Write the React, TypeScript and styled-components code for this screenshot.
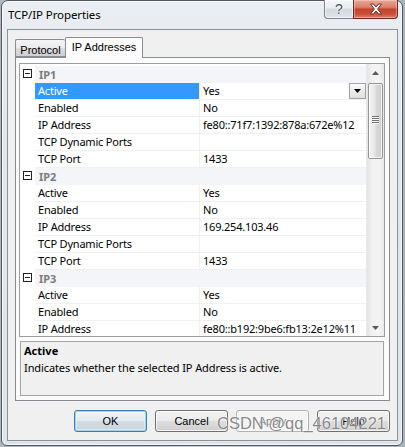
import React from "react";
import styled, { createGlobalStyle } from "styled-components";

const Global = createGlobalStyle`
  html, body { margin: 0; padding: 0; }
  body {
    background: linear-gradient(90deg, #aeb6be 0%, #c9cfd5 50%, #aab2ba 100%);
    width: 405px; height: 447px; overflow: hidden;
    font-family: "Noto Sans", "Open Sans", sans-serif;
  }
`;

const UI = `"Noto Sans", "Open Sans", sans-serif`;
const MS = `"Liberation Sans", Arial, sans-serif`;

const Window = styled.div`
  position: relative;
  box-sizing: border-box;
  width: 402px;
  height: 446px;
  margin-left: 1px;
  border: 1px solid #4f5862;
  border-radius: 7px 7px 6px 6px;
  background: linear-gradient(180deg, #eaeef2 0%, #e2e7ec 30%, #dfe4e9 100%);
  box-shadow: inset 0 0 0 1px rgba(255,255,255,0.7);
  display: flex;
  flex-direction: column;
  padding: 0 4px 4px 5px;
`;

const TitleBar = styled.div`
  height: 28px;
  display: flex;
  align-items: flex-start;
  justify-content: space-between;
`;

const Title = styled.div`
  font-family: ${UI};
  font-size: 11.5px;
  letter-spacing: -0.1px;
  color: #000;
  padding: 6px 0 0 1px;
  line-height: 16px;
  text-shadow: 0 0 6px rgba(255,255,255,0.9);
`;

const Caption = styled.div`
  display: flex;
  margin-top: -1px;
`;

const HelpBtn = styled.div`
  box-sizing: border-box;
  width: 29px;
  height: 19px;
  border: 1px solid #7c858f;
  border-top: none;
  border-right: none;
  border-radius: 0 0 0 4px;
  background: linear-gradient(180deg, #f4f6f8 0%, #e9edf1 45%, #d3d9df 50%, #dde3e9 100%);
  box-shadow: inset 0 0 0 1px rgba(255,255,255,0.6);
  display: flex;
  align-items: center;
  justify-content: center;
  font-family: ${MS};
  font-size: 14px;
  color: #4a535c;
  line-height: 1;
  text-shadow: 0 0 2px #fff, 0 0 1px #fff;
`;

const CloseBtn = styled.div`
  box-sizing: border-box;
  width: 45px;
  height: 19px;
  border: 1px solid #6a2a20;
  border-top: none;
  border-radius: 0 0 4px 0;
  background: linear-gradient(180deg, #e8a897 0%, #d9806c 40%, #c5432a 52%, #c9503a 78%, #de8066 100%);
  box-shadow: inset 0 0 0 1px rgba(255,220,210,0.45);
  display: flex;
  align-items: center;
  justify-content: center;
`;

const Client = styled.div`
  flex: 1;
  box-sizing: border-box;
  border: 1px solid #8a939c;
  background: #f0f0f0;
  display: flex;
  flex-direction: column;
  padding: 7px 7px 8px 7px;
`;

const TabRow = styled.div`
  display: flex;
  align-items: flex-end;
  height: 20px;
  position: relative;
  z-index: 1;
`;

const Tab = styled.div<{ $active?: boolean }>`
  box-sizing: border-box;
  font-family: ${MS};
  font-size: 11px;
  color: #000;
  white-space: nowrap;
  border: 1px solid #898c95;
  border-radius: 2px 2px 0 0;
  display: flex;
  align-items: center;
  justify-content: center;
  ${(p) =>
    p.$active
      ? `
    height: 21px;
    margin-bottom: -1px;
    border-bottom: none;
    background: #fbfbfb;
    padding: 0 0 2px 0;
    width: 78px;
  `
      : `
    height: 18px;
    border-right: none;
    background: linear-gradient(180deg, #f3f3f3 0%, #ebebeb 50%, #dddddd 51%, #cfcfcf 100%);
    width: 50px;
    padding-top: 3px;
  `}
`;

const Panel = styled.div`
  box-sizing: border-box;
  height: 344px;
  border: 1px solid #898c95;
  background: #fbfbfb;
  display: flex;
  flex-direction: column;
  padding: 5px 4px 4px 3px;
  gap: 4px;
`;

const Grid = styled.div`
  box-sizing: border-box;
  height: 274px;
  border: 1px solid #9a9da2;
  background: #fff;
  display: flex;
  overflow: hidden;
`;

const Rows = styled.div`
  flex: 1;
  padding-top: 2px;
  overflow: hidden;
`;

const Row = styled.div`
  display: grid;
  grid-template-columns: 15px 165px 1fr;
  height: 17px;
`;

const MarginCell = styled.div`
  background: #fff;
  position: relative;
`;

const Expander = styled.div`
  position: absolute;
  left: 3px;
  top: 3px;
  box-sizing: border-box;
  width: 9px;
  height: 9px;
  border: 1px solid #222;
  background: #fff;
  &::after {
    content: "";
    position: absolute;
    left: 1px;
    top: 3px;
    width: 5px;
    height: 1px;
    background: #222;
  }
`;

const CatLabel = styled.div`
  grid-column: 2 / 4;
  background: #f3f5f8;
  font-family: ${UI};
  font-weight: 700;
  font-size: 11px;
  color: #7c7c7c;
  line-height: 17px;
  padding-left: 4px;
`;

const Label = styled.div<{ $selected?: boolean }>`
  box-sizing: border-box;
  font-family: ${UI};
  font-size: 11px;
  letter-spacing: -0.2px;
  line-height: 16px;
  padding-left: 3px;
  white-space: nowrap;
  overflow: hidden;
  border-right: 1px solid #f0f0f0;
  border-bottom: 1px solid #f0f0f0;
  color: ${(p) => (p.$selected ? "#fff" : "#000")};
  background: ${(p) => (p.$selected ? "#3399ff" : "#fff")};
`;

const Value = styled.div`
  box-sizing: border-box;
  font-family: ${UI};
  font-size: 11px;
  letter-spacing: -0.2px;
  line-height: 16px;
  padding-left: 3px;
  white-space: nowrap;
  border-bottom: 1px solid #f0f0f0;
  color: #000;
  display: flex;
  align-items: flex-start;
`;

const DropBtn = styled.div`
  margin-left: auto;
  box-sizing: border-box;
  width: 17px;
  height: 16px;
  border: 1px solid #a3a3a3;
  background: linear-gradient(180deg, #fbfbfb 0%, #ececec 50%, #dedede 100%);
  display: flex;
  align-items: center;
  justify-content: center;
`;

const ScrollBar = styled.div`
  width: 17px;
  flex: none;
  background: linear-gradient(90deg, #e4e4e4 0%, #f2f2f2 30%, #f4f4f4 70%, #e9e9e9 100%);
  border-left: 1px solid #eaeaea;
  display: flex;
  flex-direction: column;
`;

const Arrow = styled.div`
  height: 17px;
  display: flex;
  align-items: center;
  justify-content: center;
  flex: none;
`;

const Thumb = styled.div`
  box-sizing: border-box;
  margin: 2px 1px 0 1px;
  height: 76px;
  border: 1px solid #959595;
  border-radius: 2px;
  background: linear-gradient(90deg, #f3f3f3 0%, #e8e8e8 45%, #d8d8d8 55%, #d0d0d0 100%);
  box-shadow: inset 0 0 0 1px rgba(255,255,255,0.7);
  display: flex;
  align-items: center;
  justify-content: center;
  flex: none;
`;

const Grip = styled.div`
  width: 7px;
  display: flex;
  flex-direction: column;
  gap: 1px;
  margin-top: -4px;
  span {
    display: block;
    height: 1px;
    background: #6f6f6f;
    box-shadow: 0 1px 0 #fff;
  }
`;

const Spacer = styled.div`
  flex: 1;
`;

const Desc = styled.div`
  box-sizing: border-box;
  height: 55px;
  margin: 0 1px 0 1px;
  border: 1px solid #a5a5a5;
  background: #f0f0f0;
  padding: 1px 3px;
  font-family: ${UI};
  font-size: 11px;
  color: #000;
  display: flex;
  flex-direction: column;
  gap: 1px;
`;

const DescTitle = styled.div`
  font-weight: 700;
  line-height: 16px;
`;

const DescText = styled.div`
  line-height: 16px;
  letter-spacing: -0.1px;
  white-space: nowrap;
`;

const Buttons = styled.div`
  margin-top: 9px;
  display: flex;
  justify-content: flex-end;
  gap: 8px;
`;

const Button = styled.div<{ $default?: boolean; $disabled?: boolean }>`
  box-sizing: border-box;
  width: 73px;
  height: 22px;
  border-radius: 3px;
  font-family: ${MS};
  font-size: 11px;
  display: flex;
  align-items: center;
  justify-content: center;
  border: 1px solid ${(p) => (p.$default ? "#3c7fb1" : p.$disabled ? "#adb2b5" : "#707070")};
  color: ${(p) => (p.$disabled ? "#838383" : "#000")};
  background: ${(p) =>
    p.$disabled
      ? "#f4f4f4"
      : p.$default
      ? "linear-gradient(180deg, #eef3f6 0%, #e3eaef 50%, #d3dde3 51%, #c9d4db 100%)"
      : "linear-gradient(180deg, #f2f2f2 0%, #ebebeb 50%, #dddddd 51%, #cfcfcf 100%)"};
  box-shadow: ${(p) =>
    p.$default ? "inset 0 0 0 1px #9fd4f0, inset 0 0 0 2px rgba(255,255,255,0.4)" : "inset 0 0 0 1px rgba(255,255,255,0.75)"};
`;

const Watermark = styled.div`
  position: absolute;
  right: 16px;
  bottom: 12px;
  font-family: ${MS};
  font-size: 16.5px;
  color: rgba(105, 105, 105, 0.8);
  text-shadow: 0 0 1px #fff, 0 0 2px rgba(255,255,255,0.9);
  pointer-events: none;
  white-space: nowrap;
`;

const Down = ({ color = "#000" }: { color?: string }) => (
  <svg width="7" height="4" viewBox="0 0 7 4">
    <path d="M0 0 H7 L3.5 4 Z" fill={color} />
  </svg>
);
const Up = ({ color = "#000" }: { color?: string }) => (
  <svg width="7" height="4" viewBox="0 0 7 4">
    <path d="M0 4 H7 L3.5 0 Z" fill={color} />
  </svg>
);

type Item = { label: string; value?: string; selected?: boolean; drop?: boolean };
type Group = { name: string; items: Item[] };

const groups: Group[] = [
  {
    name: "IP1",
    items: [
      { label: "Active", value: "Yes", selected: true, drop: true },
      { label: "Enabled", value: "No" },
      { label: "IP Address", value: "fe80::71f7:1392:878a:672e%12" },
      { label: "TCP Dynamic Ports", value: "" },
      { label: "TCP Port", value: "1433" },
    ],
  },
  {
    name: "IP2",
    items: [
      { label: "Active", value: "Yes" },
      { label: "Enabled", value: "No" },
      { label: "IP Address", value: "169.254.103.46" },
      { label: "TCP Dynamic Ports", value: "" },
      { label: "TCP Port", value: "1433" },
    ],
  },
  {
    name: "IP3",
    items: [
      { label: "Active", value: "Yes" },
      { label: "Enabled", value: "No" },
      { label: "IP Address", value: "fe80::b192:9be6:fb13:2e12%11" },
      { label: "TCP Dynamic Ports", value: "" },
      { label: "TCP Port", value: "1433" },
    ],
  },
];

export default function App() {
  return (
    <>
      <Global />
      <Window>
        <TitleBar>
          <Title>TCP/IP Properties</Title>
          <Caption>
            <HelpBtn>?</HelpBtn>
            <CloseBtn>
              <svg width="14" height="12" viewBox="0 0 14 12">
                <path
                  d="M1.5 1 H4.5 L7 4 L9.5 1 H12.5 L8.6 6 L12.5 11 H9.5 L7 8 L4.5 11 H1.5 L5.4 6 Z"
                  fill="#fff"
                  stroke="#5a2218"
                  strokeWidth="0.9"
                  strokeLinejoin="round"
                />
              </svg>
            </CloseBtn>
          </Caption>
        </TitleBar>
        <Client>
          <TabRow>
            <Tab>Protocol</Tab>
            <Tab $active>IP Addresses</Tab>
          </TabRow>
          <Panel>
            <Grid>
              <Rows>
                {groups.map((g) => (
                  <React.Fragment key={g.name}>
                    <Row>
                      <MarginCell>
                        <Expander />
                      </MarginCell>
                      <CatLabel>{g.name}</CatLabel>
                    </Row>
                    {g.items.map((it, i) => (
                      <Row key={g.name + i}>
                        <MarginCell />
                        <Label $selected={it.selected}>{it.label}</Label>
                        <Value>
                          {it.value}
                          {it.drop && (
                            <DropBtn>
                              <Down />
                            </DropBtn>
                          )}
                        </Value>
                      </Row>
                    ))}
                  </React.Fragment>
                ))}
              </Rows>
              <ScrollBar>
                <Arrow>
                  <Up color="#5a5a5a" />
                </Arrow>
                <Thumb>
                  <Grip>
                    <span />
                    <span />
                    <span />
                    <span />
                  </Grip>
                </Thumb>
                <Spacer />
                <Arrow>
                  <Down color="#5a5a5a" />
                </Arrow>
              </ScrollBar>
            </Grid>
            <Desc>
              <DescTitle>Active</DescTitle>
              <DescText>Indicates whether the selected IP Address is active.</DescText>
            </Desc>
          </Panel>
          <Buttons>
            <Button $default>OK</Button>
            <Button>Cancel</Button>
            <Button $disabled>Apply</Button>
            <Button>Help</Button>
          </Buttons>
        </Client>
        <Watermark>CSDN @qq_46104221</Watermark>
      </Window>
    </>
  );
}
